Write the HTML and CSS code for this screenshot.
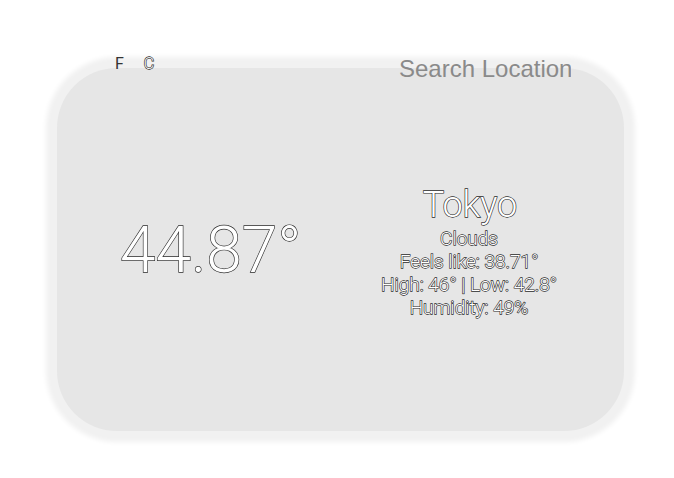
FILE: index.html
```html
<!DOCTYPE html>
<html lang="en">
<head>
<meta charset="utf-8">
<title>Weather</title>
<link rel="stylesheet" href="styles.css">
</head>
<body>
<div class="app">
  <div class="card">
    <div class="temp">44.87°</div>
    <div class="details">
      <div class="city">Tokyo</div>
      <div class="line">Clouds</div>
      <div class="line">Feels like: 38.71°</div>
      <div class="line">High: 46° | Low: 42.8°</div>
      <div class="line">Humidity: 49%</div>
    </div>
  </div>
  <div class="header">
    <div class="units">
      <span class="unit active">F</span>
      <span class="unit">C</span>
    </div>
    <input class="search" type="text" placeholder="Search Location">
  </div>
</div>
</body>
</html>
```

FILE: styles.css
```css
html, body {
  margin: 0;
  padding: 0;
  background: #ffffff;
  overflow: hidden;
}

body {
  font-family: Roboto, "Liberation Sans", sans-serif;
}

.app {
  position: relative;
  width: 674px;
  height: 478px;
  padding: 68px 0 0 57px;
  box-sizing: border-box;
}

.card {
  width: 567px;
  height: 363px;
  background: #e6e6e6;
  border-radius: 60px;
  box-shadow: 0 0 5px 11px #f1f1f1;
  display: flex;
  align-items: center;
  justify-content: space-between;
  padding: 0 67px 0 63px;
  box-sizing: border-box;
}

.temp,
.city,
.line,
.unit {
  color: #ffffff;
  font-weight: 300;
  -webkit-text-stroke: 1.3px #2a2a2a;
  paint-order: stroke fill;
}

.temp {
  font-size: 64px;
  line-height: 1;
  margin-top: 2px;
}

.details {
  display: flex;
  flex-direction: column;
  align-items: center;
  margin-top: 4px;
}

.city {
  font-size: 36px;
  line-height: 40px;
  margin-bottom: 2px;
  margin-left: 2px;
}

.line {
  font-size: 19px;
  line-height: 23px;
}

.header {
  position: absolute;
  left: 115px;
  top: 54px;
  right: 103px;
  display: flex;
  justify-content: space-between;
  align-items: flex-start;
}

.units {
  display: flex;
  gap: 20px;
}

.unit {
  font-size: 16px;
  line-height: 19px;
}

.unit.active {
  color: #333333;
  font-weight: 400;
  -webkit-text-stroke: 0;
}

.search {
  border: none;
  background: transparent;
  outline: none;
  padding: 0;
  margin-top: 1px;
  width: 172px;
  font-family: "Liberation Sans", Arial, sans-serif;
  font-size: 24px;
  line-height: 28px;
  height: 28px;
  color: #888888;
}

.search::placeholder {
  color: #8a8a8a;
  opacity: 1;
}
```
